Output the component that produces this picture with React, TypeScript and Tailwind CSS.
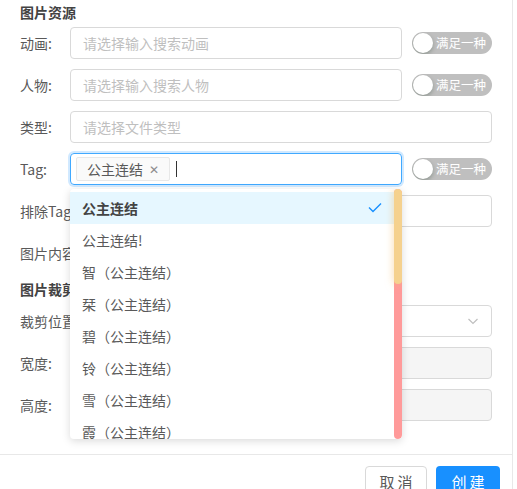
import React from 'react'

const options = [
    '公主连结',
    '公主连结!',
    '智（公主连结）',
    '栞（公主连结）',
    '碧（公主连结）',
    '铃（公主连结）',
    '雪（公主连结）',
    '霞（公主连结）',
]

function Switch() {
    return (
        <div className="shrink-0 w-[80px] h-[22px] rounded-full bg-[#bfbfbf] flex items-center pl-[1px] gap-[3px] overflow-hidden">
            <span className="shrink-0 w-[20px] h-[20px] rounded-full bg-white shadow-[0_2px_4px_rgba(0,35,11,0.25)]" />
            <span className="text-white text-[12.5px] leading-none whitespace-nowrap">满足一种</span>
        </div>
    )
}

function Label({ text }: { text: string }) {
    return <div className="w-[50px] shrink-0 whitespace-nowrap text-[#595959]">{text}</div>
}

function Input({ placeholder, disabled }: { placeholder?: string; disabled?: boolean }) {
    return (
        <div className={'flex-1 h-[32px] rounded-[4px] border border-[#d9d9d9] px-[12px] flex items-center text-[#bfbfbf] ' + (disabled ? 'bg-[#f5f5f5]' : 'bg-white')}>
            {placeholder}
        </div>
    )
}

export default function App() {
    return (
        <div className="relative w-[517px] h-[489px] bg-white overflow-hidden font-['Noto_Sans_CJK_SC',sans-serif] text-[14px] leading-[20px]">
            <div className="w-[513px] h-full border-r border-[#e8e8e8] flex flex-col">
                <div className="pl-[20px] pr-[20px] pt-[2px] flex flex-col">
                    <div className="h-[20px] font-bold text-[#434343] mb-[5px]">图片资源</div>
                    <div className="flex flex-col gap-[10px]">
                        <div className="flex items-center">
                            <Label text="动画:" />
                            <Input placeholder="请选择输入搜索动画" />
                            <div className="w-[10px]" />
                            <Switch />
                        </div>
                        <div className="flex items-center">
                            <Label text="人物:" />
                            <Input placeholder="请选择输入搜索人物" />
                            <div className="w-[10px]" />
                            <Switch />
                        </div>
                        <div className="flex items-center">
                            <Label text="类型:" />
                            <Input placeholder="请选择文件类型" />
                        </div>
                        <div className="flex items-center">
                            <Label text="Tag:" />
                            <div className="flex-1 h-[32px] rounded-[4px] border border-[#40a9ff] shadow-[0_0_0_2px_rgba(24,144,255,0.2)] px-[5px] flex items-center gap-[6px]">
                                <span className="h-[24px] px-[10px] rounded-[2px] bg-[#fafafa] border border-[#e8e8e8] flex items-center gap-[6px] text-[#595959]">
                                    公主连结
                                    <span className="text-[12px] text-[#8c8c8c]">✕</span>
                                </span>
                                <span className="w-px h-[16px] bg-[#333]" />
                            </div>
                            <div className="w-[10px]" />
                            <Switch />
                        </div>
                        <div className="flex items-center">
                            <Label text="排除Tag:" />
                            <Input />
                        </div>
                        <div className="flex items-center h-[32px]">
                            <Label text="图片内容:" />
                        </div>
                    </div>
                    <div className="h-[20px] font-bold text-[#434343] mt-[10px] mb-[6px]">图片裁剪</div>
                    <div className="flex flex-col gap-[10px]">
                        <div className="flex items-center">
                            <Label text="裁剪位置:" />
                            <div className="flex-1 h-[32px] rounded-[4px] border border-[#d9d9d9] px-[12px] flex items-center justify-end">
                                <svg width="12" height="12" viewBox="0 0 12 12" fill="none" stroke="#bfbfbf" strokeWidth="1.2">
                                    <path d="M1.5 4 L6 8.5 L10.5 4" />
                                </svg>
                            </div>
                        </div>
                        <div className="flex items-center">
                            <Label text="宽度:" />
                            <Input disabled />
                        </div>
                        <div className="flex items-center">
                            <Label text="高度:" />
                            <Input disabled />
                        </div>
                    </div>
                </div>
                <div className="mt-[33px] border-t border-[#e8e8e8] flex justify-end gap-[9px] pt-[11px] pr-[12px]">
                    <button className="h-[32px] w-[62px] shrink-0 rounded-[4px] border border-[#d9d9d9] bg-white text-[#595959] text-[15px] tracking-[0.2em] indent-[0.2em]">取消</button>
                    <button className="h-[32px] w-[64px] shrink-0 rounded-[4px] bg-[#1890ff] text-white text-[15px] tracking-[0.2em] indent-[0.2em]">创建</button>
                </div>
            </div>

            <div className="absolute left-[70px] top-[189px] w-[332px] h-[250px] bg-white rounded-[4px] shadow-[0_2px_8px_rgba(0,0,0,0.15)] overflow-hidden">
                <div className="pt-[3px] pr-[8px]">
                    {options.map((opt, i) => (
                        <div key={i} className={'h-[32px] px-[12px] flex items-center justify-between ' + (i === 0 ? 'bg-[#e6f7ff] font-bold text-[#434343]' : 'text-[#595959]')}>
                            <span>{opt}</span>
                            {i === 0 && (
                                <svg width="14" height="12" viewBox="0 0 14 12" fill="none" stroke="#1890ff" strokeWidth="1.4">
                                    <path d="M1 5.5 L5 9.5 L13 1.5" />
                                </svg>
                            )}
                        </div>
                    ))}
                </div>
                <div className="absolute right-0 top-0 w-[8px] h-full rounded-full bg-[#ff9a9a]">
                    <div className="w-[8px] h-[95px] rounded-full bg-[#f5d18e] shadow-[0_0_8px_rgba(245,190,110,0.6)]" />
                </div>
            </div>
        </div>
    )
}
